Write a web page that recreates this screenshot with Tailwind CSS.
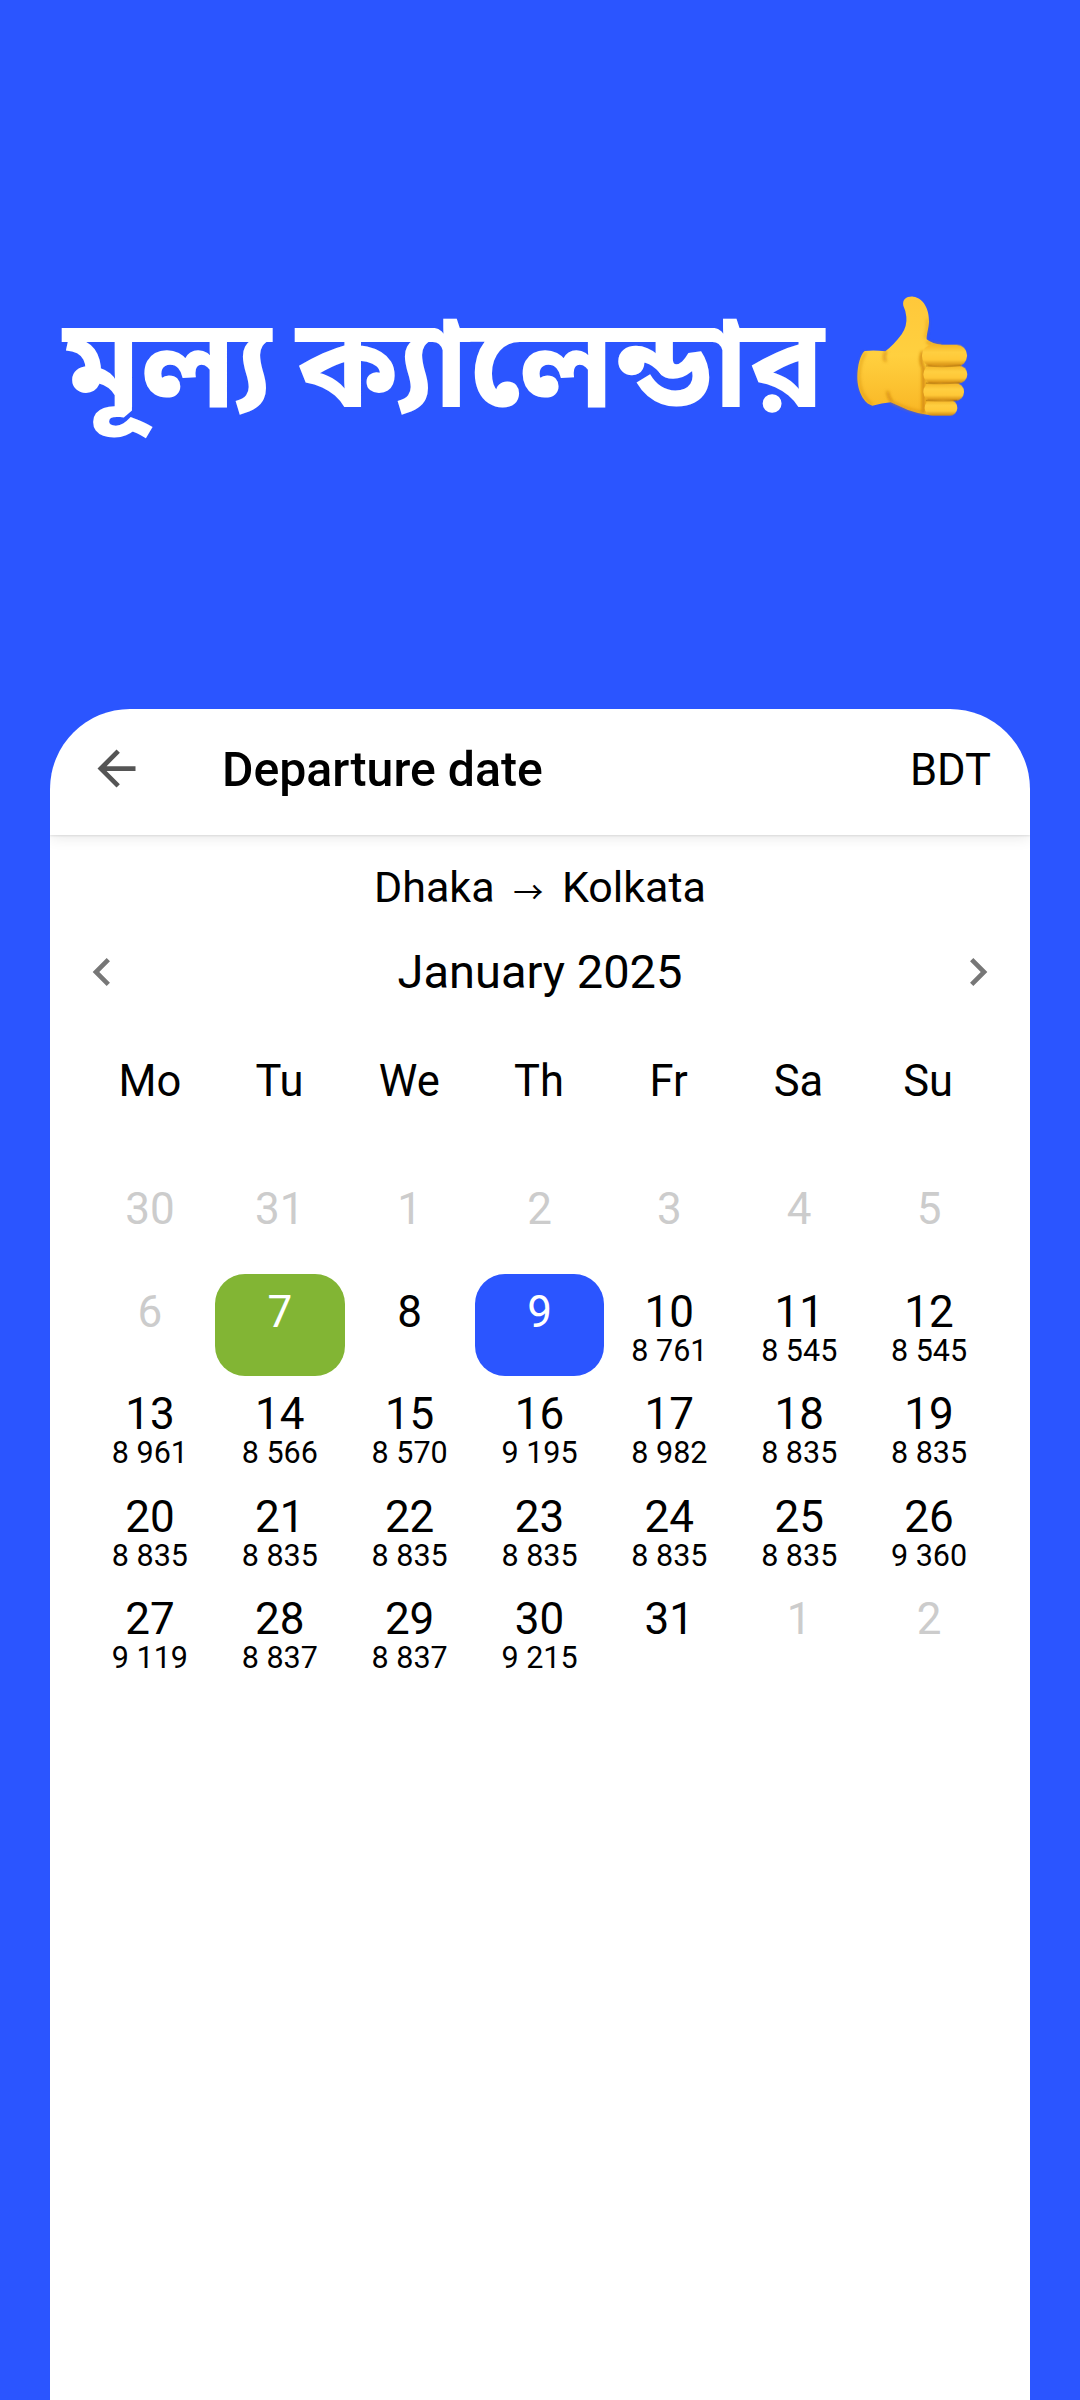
<!DOCTYPE html>
<html lang="bn">
<head>
  <meta charset="UTF-8" />
  <meta name="viewport" content="width=device-width, initial-scale=1.0"/>
  <title>মূল্য ক্যালেন্ডার</title>
  <script src="https://cdn.jsdelivr.net/npm/@tailwindcss/browser@4"></script>
</head>
<body class="bg-[#2b55ff] font-[Roboto,sans-serif] text-black">
<div class="h-[2400px] flex flex-col overflow-hidden">

  <!-- Headline -->
  <header class="h-[709px] shrink-0 flex items-start pl-[63px] pt-[290px]">
    <h1 class="w-[764px] h-[150px] mt-[10px] text-white text-[125.5px] leading-[150px] font-bold whitespace-nowrap font-['Noto_Sans_Bengali','Noto_Sans',sans-serif] [word-spacing:-8px]">মূল্য ক্যালেন্ডার</h1>
    <!-- Thumbs up -->
    <svg class="w-[140px] h-[150px] ml-[13px] -mt-[10px] shrink-0" viewBox="0 0 420 450">
      <defs>
        <linearGradient id="hand" x1="0" y1="0" x2="0" y2="1">
          <stop offset="0" stop-color="#ffc83a"/>
          <stop offset="0.5" stop-color="#ffd03f"/>
          <stop offset="1" stop-color="#f9b624"/>
        </linearGradient>
        <linearGradient id="finger" x1="0" y1="0" x2="0" y2="1">
          <stop offset="0" stop-color="#f5b526"/>
          <stop offset="0.35" stop-color="#ffcf41"/>
          <stop offset="0.7" stop-color="#ffc837"/>
          <stop offset="1" stop-color="#d0870f"/>
        </linearGradient>
        <filter id="soft"><feGaussianBlur stdDeviation="4"/></filter>
      </defs>
      <path fill="url(#hand)" d="M74 213Q104 210 136 214Q163 193 185 163Q202 137 199 110Q197 91 190 77C186 57 202 48 220 50C251 54 268 88 267 125C266 145 259 164 260 178Q278 193 304 194L304 404L262 404Q231 400 204 390Q181 380 152 367Q126 370 97 377C72 371 52 333 52 292C52 255 62 222 74 213Z"/>
      <g filter="url(#soft)" fill="none" stroke="#d08510" stroke-width="7" stroke-linecap="round">
        <path d="M137 216Q129 231 136 242" opacity=".8"/>
        <path d="M154 363Q144 350 143 337"/>
        <path d="M156 367Q204 390 250 398" opacity=".6"/>
        <path d="M262 120Q264 145 256 172" opacity=".4"/>
        <path d="M247 218Q238 243 250 264V396" stroke-width="9"/>
        <path d="M262 186Q278 195 300 195" opacity=".7"/>
        <path d="M75 219Q57 249 57 292Q58 344 94 372" opacity=".5"/>
      </g>
      <rect x="246" y="194" width="135" height="65" rx="31" fill="url(#finger)"/>
      <rect x="250" y="256" width="132" height="54" rx="27" fill="url(#finger)"/>
      <rect x="250" y="309" width="122" height="53" rx="26" fill="url(#finger)"/>
      <rect x="254" y="360" width="98" height="47" rx="23" fill="url(#finger)"/>
      <g fill="none" stroke="#a66a0c" stroke-width="3.5" stroke-linecap="round" opacity=".75">
        <path d="M259 257Q312 262 362 256"/>
        <path d="M259 309Q312 312 358 308"/>
        <path d="M259 361Q312 363 350 361"/>
      </g>
    </svg>
  </header>

  <!-- Phone screen -->
  <main class="w-[980px] ml-[50px] grow bg-white rounded-t-[80px] overflow-hidden">
    <div class="relative h-[126px] flex items-center pl-[38px] pr-[39px] pb-[3px] shadow-[0_1px_2px_rgba(0,0,0,0.1),0_2px_14px_rgba(0,0,0,0.1)]">
      <svg class="size-[57px] mt-[-5px] fill-[#555]" viewBox="0 0 24 24"><path d="M20 11H7.83l5.59-5.59L12 4l-8 8 8 8 1.41-1.41L7.83 13H20z"/></svg>
      <h2 class="ml-[77px] text-[48.2px] font-medium">Departure date</h2>
      <span class="ml-auto text-[43.5px]">BDT</span>
    </div>

    <div class="h-[102px] pt-[2px] flex items-center justify-center text-[43px] whitespace-pre">Dhaka <span class="w-[46px] text-center font-['Noto_Sans_CJK_JP'] text-[30px] leading-none mt-[5px]">→</span> Kolkata</div>

    <div class="h-[70px] flex items-center justify-between pl-[24px] pr-[24px]">
      <svg class="size-[56px] fill-[#777]" viewBox="0 0 24 24"><path d="M15.41 7.41 14 6l-6 6 6 6 1.41-1.41L10.83 12z"/></svg>
      <span class="text-[47px]">January 2025</span>
      <svg class="size-[56px] fill-[#777]" viewBox="0 0 24 24"><path d="M8.59 16.59 10 18l6-6-6-6-1.41 1.41L13.17 12z"/></svg>
    </div>

    <div id="weekdays" class="h-[164px] pt-[45px] pl-[35px] pr-[37px] grid grid-cols-7 text-center text-[43.5px] leading-[60px]"></div>
    <div id="days" class="pl-[35px] pr-[36px] grid grid-cols-7 auto-rows-[102.5px] text-center"></div>
  </main>
</div>

<script>
  const weekdays = ["Mo", "Tu", "We", "Th", "Fr", "Sa", "Su"];

  // [day, price, state]
  const days = [
    [30, "", "off"], [31, "", "off"], [1, "", "off"], [2, "", "off"], [3, "", "off"], [4, "", "off"], [5, "", "off"],
    [6, "", "off"], [7, "", "today"], [8, ""], [9, "", "selected"], [10, "8 761"], [11, "8 545"], [12, "8 545"],
    [13, "8 961"], [14, "8 566"], [15, "8 570"], [16, "9 195"], [17, "8 982"], [18, "8 835"], [19, "8 835"],
    [20, "8 835"], [21, "8 835"], [22, "8 835"], [23, "8 835"], [24, "8 835"], [25, "8 835"], [26, "9 360"],
    [27, "9 119"], [28, "8 837"], [29, "8 837"], [30, "9 215"], [31, ""], [1, "", "off"], [2, "", "off"]
  ];

  const states = {
    off: "text-[#cccccc]",
    today: "bg-[#82b534] text-white",
    selected: "bg-[#2b55ff] text-white"
  };

  document.getElementById("weekdays").innerHTML = weekdays.map(d => `<span>${d}</span>`).join("");

  document.getElementById("days").innerHTML = days.map(([day, price, state]) => `
    <div class="rounded-[30px] pt-[13px] ${states[state] || ""}">
      <div class="text-[44px] leading-[50px]">${day}</div>
      <div class="text-[30.5px] leading-[28px]">${price}</div>
    </div>
  `).join("");
</script>
</body>
</html>
